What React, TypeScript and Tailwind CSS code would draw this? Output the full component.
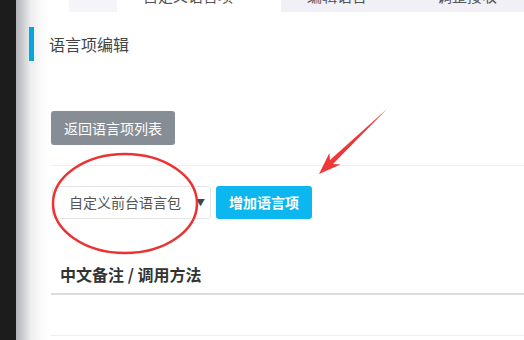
// Language item editor — tab strip, actions and table header
const font = "font-['Noto_Sans_CJK_SC','Noto_Sans',sans-serif]";

function Annotations() {
  return (
    <svg
      className="absolute inset-0 pointer-events-none"
      width={524}
      height={340}
      viewBox="0 0 524 340"
    >
      <ellipse cx={125} cy={203.5} rx={72} ry={49.5} fill="none" stroke="#ec3232" strokeWidth={2.5} />
      <polygon
        points="319,174 329.4,152.9 330,160 388.3,107.7 387.7,108.3 333,164 340.6,164.5"
        fill="#f03838"
      />
    </svg>
  );
}

export default function App() {
  return (
    <div className={`relative w-[524px] h-[340px] flex overflow-hidden bg-white ${font}`}>
      <div className="w-[16px] shrink-0 bg-[#1c1c1c]" />

      <div className="flex-1 flex flex-col bg-[linear-gradient(to_right,#b1b2b9,#eeeeef_15px,#fbfbfb_26px,#fff_34px)]">
        {/* Top tabs (cut off) */}
        <div className="h-[12px] flex ml-[53px] overflow-hidden text-[15px] text-[#555] leading-[15px]">
          <div className="w-[48px] bg-[#f5f5f9]" />
          <div className="w-[164px] bg-white pl-[26px]">
            <span className="block -mt-[12px]">自定义语言项</span>
          </div>
          <div className="flex-1 bg-[#f0f0f6] flex">
            <span className="block -mt-[12px] ml-[26px]">编辑语言</span>
            <span className="block -mt-[12px] ml-[70px]">调整接收</span>
          </div>
        </div>

        {/* Title */}
        <div className="mt-[15px] h-[34px] flex items-center">
          <span className="ml-[13px] w-[5px] h-[34px] bg-[#05a6dc]" />
          <span className="ml-[15px] text-[16px] text-[#444]">语言项编辑</span>
        </div>

        <div className="pl-[35px] flex flex-col">
          <button className="mt-[50px] w-[124px] h-[34px] rounded-[3px] bg-[#868d94] text-white text-[14px]">
            返回语言项列表
          </button>

          <div className="mt-[20px] h-px bg-[#efefef]" />

          <div className="mt-[20px] flex items-center">
            <div className="ml-[1px] w-[159px] h-[33px] border border-[#e6e6e6] rounded-[3px] flex items-center pl-[16px] pr-[5px] text-[14px] text-[#555]">
              <span className="flex-1">自定义前台语言包</span>
              <span className="text-[9px] text-[#444]">▼</span>
            </div>
            <button className="ml-[5px] w-[96px] h-[33px] rounded-[3px] bg-[#0bb7ee] text-white text-[14px] font-bold">
              增加语言项
            </button>
          </div>

          <div className="mt-[43px] pl-[9px] h-[24px] text-[16px] leading-[24px] font-bold text-[#333]">
            中文备注 / 调用方法
          </div>
          <div className="mt-[7px] h-[2px] bg-[#dcdcdc]" />
          <div className="mt-[40px] h-px bg-[#eeeeee]" />
        </div>
      </div>

      <Annotations />
    </div>
  );
}
